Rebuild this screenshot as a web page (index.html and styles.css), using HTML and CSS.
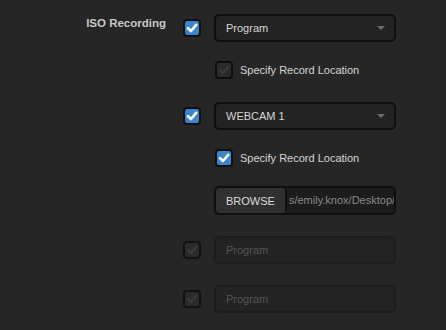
FILE: index.html
```html
<!DOCTYPE html>
<html lang="en">
<head>
  <meta charset="UTF-8">
  <title>ISO Recording</title>
  <link rel="stylesheet" href="styles.css">
</head>
<body>
  <div class="setting">
    <div class="setting-label">ISO Recording</div>
    <div class="setting-body">
      <div class="source">
        <span class="check on"><svg viewBox="0 0 14 14"><path d="M3 7.2 L6 10 L11.2 3.8"/></svg></span>
        <div class="select"><span>Program</span><i class="caret"></i></div>
      </div>
      <div class="sub-option">
        <span class="check off"><svg viewBox="0 0 14 14"><path d="M3 7.2 L6 10 L11.2 3.8"/></svg></span>
        <span>Specify Record Location</span>
      </div>

      <div class="source">
        <span class="check on"><svg viewBox="0 0 14 14"><path d="M3 7.2 L6 10 L11.2 3.8"/></svg></span>
        <div class="select"><span>WEBCAM 1</span><i class="caret"></i></div>
      </div>
      <div class="sub-option">
        <span class="check on"><svg viewBox="0 0 14 14"><path d="M3 7.2 L6 10 L11.2 3.8"/></svg></span>
        <span>Specify Record Location</span>
      </div>
      <div class="browse">
        <button class="browse-btn">BROWSE</button>
        <span class="path">s/emily.knox/Desktop/</span>
      </div>

      <div class="source disabled">
        <span class="check off"><svg viewBox="0 0 14 14"><path d="M3 7.2 L6 10 L11.2 3.8"/></svg></span>
        <div class="select"><span>Program</span></div>
      </div>
      <div class="source disabled">
        <span class="check off"><svg viewBox="0 0 14 14"><path d="M3 7.2 L6 10 L11.2 3.8"/></svg></span>
        <div class="select"><span>Program</span></div>
      </div>
    </div>
  </div>
</body>
</html>
```

FILE: styles.css
```css
html, body {
  margin: 0;
  height: 100%;
  background-color: #262626;
}
body {
  font-family: "Liberation Sans", Arial, sans-serif;
  font-size: 11px;
  color: #d6d6d6;
}
.setting {
  display: flex;
  gap: 17px;
  padding-top: 14px;
}
.setting-label {
  width: 166px;
  text-align: right;
  font-weight: bold;
  font-size: 11.5px;
  color: #c8c8c8;
  line-height: 28px;
  margin-top: -5px;
}
.setting-body {
  display: flex;
  flex-direction: column;
}
.source {
  display: flex;
  align-items: center;
  gap: 13px;
  height: 28px;
}
.check {
  width: 14px;
  height: 14px;
  border: 2px solid #0e0e0e;
  border-radius: 4px;
  display: flex;
  align-items: center;
  justify-content: center;
  flex: none;
}
.check svg {
  width: 14px;
  height: 14px;
}
.check path {
  fill: none;
  stroke-width: 2.6;
  stroke-linecap: round;
  stroke-linejoin: round;
}
.check.on {
  background-color: #3b84cc;
}
.check.on path {
  stroke: #fff;
}
.check.off {
  background-color: #2a2a2a;
}
.check.off path {
  stroke: #3a3a3a;
}
.select {
  width: 159px;
  height: 24px;
  border: 2px solid #0f0f0f;
  border-radius: 5px;
  background-color: #232323;
  display: flex;
  align-items: center;
  justify-content: space-between;
  padding: 0 9px 0 10px;
}
.select span {
  flex: 1;
}
.caret {
  width: 0;
  height: 0;
  border-left: 4px solid transparent;
  border-right: 4px solid transparent;
  border-top: 4px solid #6c6c6c;
}
.sub-option {
  display: flex;
  align-items: center;
  gap: 7px;
  height: 18px;
  margin: 19px 0 23px 32px;
}
.sub-option + .browse {
  margin-top: -4px;
}
.browse {
  display: flex;
  width: 178px;
  height: 25px;
  margin-left: 31px;
  margin-bottom: 21px;
  border: 2px solid #0f0f0f;
  border-radius: 5px;
  background-color: #1c1c1c;
  overflow: hidden;
}
.browse-btn {
  font-family: inherit;
  font-size: 11px;
  color: #dcdcdc;
  background-color: #303030;
  border: none;
  border-right: 2px solid #111;
  border-radius: 4px;
  padding: 0 10px;
  height: 100%;
  flex: none;
}
.path {
  color: #8a8a8a;
  line-height: 25px;
  padding-left: 2px;
  white-space: nowrap;
}
.source.disabled {
  margin-bottom: 21px;
}
.source.disabled .select {
  border-color: #1d1d1d;
  color: #555;
}
.source.disabled .check {
  border-color: #121212;
}
```
